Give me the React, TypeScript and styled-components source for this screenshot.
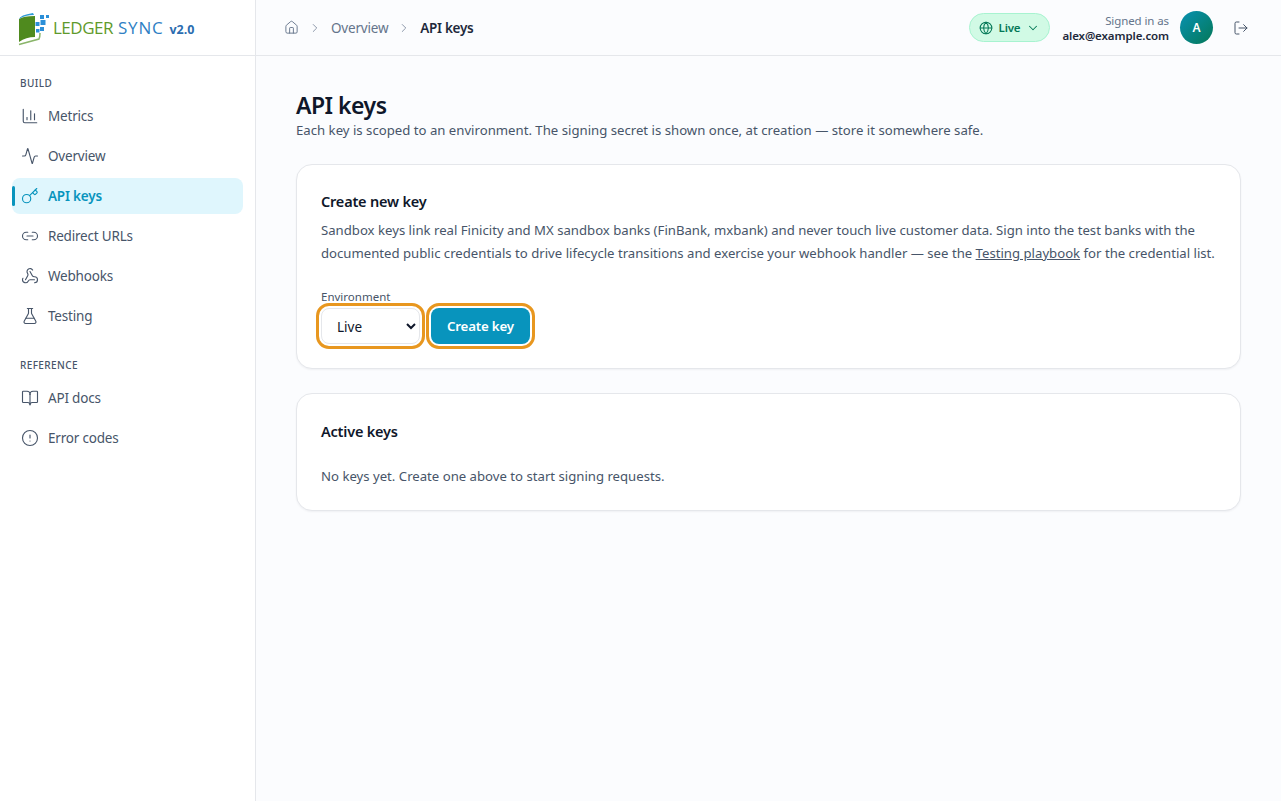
import React from 'react'
import styled, { createGlobalStyle } from 'styled-components'
import {
  ChartColumn,
  Activity,
  Key,
  Link2,
  Webhook,
  FlaskConical,
  BookOpen,
  CircleAlert,
  House,
  ChevronRight,
  ChevronDown,
  Globe,
  LogOut,
} from 'lucide-react'

const GlobalStyle = createGlobalStyle`
  * { box-sizing: border-box; }
  html, body { margin: 0; height: 100%; }
  body {
    font-family: "Noto Sans", "Open Sans", "Liberation Sans", sans-serif;
    background: #fbfcfe;
    color: #0f172a;
  }
`

const Shell = styled.div`
  display: flex;
  height: 801px;
  overflow: hidden;
`

const Sidebar = styled.aside`
  width: 256px;
  flex: none;
  background: #fff;
  border-right: 1px solid #e5e7eb;
`

const Brand = styled.div`
  height: 56px;
  display: flex;
  align-items: center;
  padding-left: 18px;
  border-bottom: 1px solid #e5e7eb;
`

const BrandName = styled.span`
  margin-left: 1px;
  font-family: "Open Sans", sans-serif;
  font-size: 17px;
  font-weight: 500;
  letter-spacing: -0.5px;
  color: #5f9a2c;
`

const BrandBlue = styled.span`
  margin-left: 5px;
  letter-spacing: 0.8px;
  color: #2f7fc4;
`

const BrandVersion = styled.span`
  margin-left: 6px;
  padding-top: 3px;
  font-family: "Open Sans", sans-serif;
  font-size: 12.5px;
  font-weight: 700;
  color: #2b6cb0;
`

const Nav = styled.nav`
  padding: 19px 12px 0;
`

const GroupLabel = styled.div`
  height: 16px;
  line-height: 16px;
  padding-left: 8px;
  font-size: 10px;
  font-weight: 500;
  letter-spacing: 0.4px;
  color: #475569;
`

const NavList = styled.ul`
  list-style: none;
  margin: 7px 0 23px;
  padding: 0;
  display: flex;
  flex-direction: column;
  gap: 4px;
`

const NavItem = styled.li<{ $active?: boolean }>`
  position: relative;
  height: 36px;
  display: flex;
  align-items: center;
  gap: 9px;
  padding-left: 9px;
  border-radius: 8px;
  font-size: 13.5px;
  font-weight: ${p => (p.$active ? 600 : 400)};
  color: ${p => (p.$active ? '#0894bd' : '#475569')};
  background: ${p => (p.$active ? '#dff6fd' : 'transparent')};
  letter-spacing: -0.2px;

  ${p =>
    p.$active &&
    `&::before {
      content: '';
      position: absolute;
      left: 0;
      top: 8px;
      bottom: 8px;
      width: 3px;
      border-radius: 2px;
      background: #0894bd;
    }`}
`

const Column = styled.div`
  flex: 1;
  min-width: 0;
`

const TopBar = styled.header`
  height: 56px;
  display: flex;
  align-items: center;
  justify-content: space-between;
  padding: 0 32px 0 28px;
  border-bottom: 1px solid #e5e7eb;
`

const Crumbs = styled.div`
  display: flex;
  align-items: center;
  gap: 9px;
  font-size: 13.5px;
  letter-spacing: -0.2px;
  color: #64748b;
`

const CurrentCrumb = styled.span`
  font-weight: 600;
  letter-spacing: -0.3px;
  color: #1e293b;
`

const TopRight = styled.div`
  display: flex;
  align-items: center;
`

const EnvPill = styled.div`
  height: 29px;
  display: flex;
  align-items: center;
  gap: 6px;
  padding: 0 9px;
  margin-right: 12px;
  border: 1px solid #a7f3d0;
  border-radius: 15px;
  background: #d1fae5;
  color: #047857;
  font-size: 11.5px;
  font-weight: 600;
  letter-spacing: -0.2px;
`

const UserBlock = styled.div`
  text-align: right;
  font-size: 11.5px;
  line-height: 15px;
  letter-spacing: -0.1px;
  color: #64748b;
`

const UserEmail = styled.div`
  font-weight: 600;
  color: #1e293b;
`

const Avatar = styled.div`
  width: 33px;
  height: 33px;
  margin: 0 20px 0 11px;
  border-radius: 50%;
  display: flex;
  align-items: center;
  justify-content: center;
  background: linear-gradient(135deg, #0891b2, #047857);
  color: #fff;
  font-size: 12px;
  font-weight: 600;
`

const Main = styled.main`
  padding: 33px 40px;
`

const Title = styled.h1`
  margin: 0;
  font-size: 23px;
  line-height: 32px;
  font-weight: 600;
  letter-spacing: -0.5px;
  color: #0f172a;
`

const Subtitle = styled.p`
  margin: 0 0 25px;
  font-size: 13.18px;
  line-height: 18px;
  color: #475569;
`

const Card = styled.section<{ $low?: boolean }>`
  padding: ${p => (p.$low ? '25px 24px 23px' : '24px')};
  margin-bottom: 24px;
  background: #fff;
  border: 1px solid #e5e7eb;
  border-radius: 16px;
  box-shadow: 0 1px 2px rgba(15, 23, 42, 0.05);
`

const CardTitle = styled.h2`
  margin: 0;
  font-size: 14.5px;
  line-height: 24px;
  font-weight: 600;
  letter-spacing: -0.2px;
  color: #0f172a;
`

const Body = styled.p`
  margin: 6px 0 0;
  font-size: 13.17px;
  line-height: 23px;
  color: #475569;
`

const DocLink = styled.a`
  color: #475569;
  text-decoration: underline;
`

const FormRow = styled.div`
  display: flex;
  align-items: flex-end;
  gap: 11px;
  margin-top: 25px;
`

const Field = styled.label`
  display: flex;
  flex-direction: column;
  gap: 4px;
  font-size: 11.5px;
  line-height: 14px;
  color: #475569;
`

const EnvSelect = styled.select`
  width: 99px;
  height: 36px;
  padding: 1px 0 0 11px;
  background: #fff;
  border: 1px solid #e5e7eb;
  border-radius: 8px;
  font: inherit;
  font-size: 13.5px;
  color: #0f172a;
  outline: 3px solid #e8971f;
  outline-offset: 2px;
`

const CreateButton = styled.button`
  height: 36px;
  padding: 0 16px;
  border: 0;
  border-radius: 8px;
  background: #0894bd;
  color: #fff;
  font: inherit;
  font-size: 13.3px;
  font-weight: 600;
  letter-spacing: -0.2px;
  outline: 3px solid #e8971f;
  outline-offset: 2px;
`

const Empty = styled.p`
  margin: 23px 0 0;
  font-size: 13.17px;
  line-height: 21px;
  color: #475569;
`

const build = [
  { name: 'Metrics', icon: ChartColumn },
  { name: 'Overview', icon: Activity },
  { name: 'API keys', icon: Key, active: true },
  { name: 'Redirect URLs', icon: Link2 },
  { name: 'Webhooks', icon: Webhook },
  { name: 'Testing', icon: FlaskConical },
]

const reference = [
  { name: 'API docs', icon: BookOpen },
  { name: 'Error codes', icon: CircleAlert },
]

const Logo = () => (
  <svg width="34" height="36" viewBox="0 0 34 36">
    <path d="M1 9 Q5 6 17 6 V27 Q8 27 1 32 Z" fill="#4f8a1e" />
    <path d="M1 9 Q2 5 15 3 L16 5 Q7 5 1 9 Z" fill="#2f9bd6" />
    <path d="M1 34.5 Q10 32 21 29 Q22 27 22 23" fill="none" stroke="#8ab56a" strokeWidth="1.5" />
    <g fill="#2b8fd8">
      <rect x="22" y="5" width="4" height="4" />
      <rect x="28" y="5" width="3" height="3" />
      <rect x="22.5" y="10" width="5" height="5" />
      <rect x="17.5" y="12" width="4" height="4" />
      <rect x="22" y="17" width="4" height="4" />
      <rect x="18" y="19" width="3.5" height="3.5" />
    </g>
  </svg>
)

const NavGroup = ({ label, items }: { label: string; items: typeof build }) => (
  <>
    <GroupLabel>{label}</GroupLabel>
    <NavList>
      {items.map(({ name, icon: Icon, active }) => (
        <NavItem key={name} $active={active}>
          <Icon size={18} strokeWidth={1.5} />
          {name}
        </NavItem>
      ))}
    </NavList>
  </>
)

export default function App() {
  return (
    <Shell>
      <GlobalStyle />
      <Sidebar>
        <Brand>
          <Logo />
          <BrandName>
            LEDGER<BrandBlue>SYNC</BrandBlue>
          </BrandName>
          <BrandVersion>v2.0</BrandVersion>
        </Brand>
        <Nav>
          <NavGroup label="BUILD" items={build} />
          <NavGroup label="REFERENCE" items={reference} />
        </Nav>
      </Sidebar>
      <Column>
        <TopBar>
          <Crumbs>
            <House size={15} strokeWidth={1.5} />
            <ChevronRight size={14} strokeWidth={1.25} />
            <span>Overview</span>
            <ChevronRight size={14} strokeWidth={1.25} />
            <CurrentCrumb>API keys</CurrentCrumb>
          </Crumbs>
          <TopRight>
            <EnvPill>
              <Globe size={14} strokeWidth={1.75} />
              Live
              <ChevronDown size={14} strokeWidth={1.75} />
            </EnvPill>
            <UserBlock>
              Signed in as
              <UserEmail>alex@example.com</UserEmail>
            </UserBlock>
            <Avatar>A</Avatar>
            <LogOut size={16} strokeWidth={1.5} color="#475569" />
          </TopRight>
        </TopBar>
        <Main>
          <Title>API keys</Title>
          <Subtitle>
            Each key is scoped to an environment. The signing secret is shown once, at creation — store it somewhere safe.
          </Subtitle>
          <Card>
            <CardTitle>Create new key</CardTitle>
            <Body>
              Sandbox keys link real Finicity and MX sandbox banks (FinBank, mxbank) and never touch live customer data. Sign into the test banks with the documented public credentials to drive lifecycle transitions and exercise your webhook handler — see the <DocLink>Testing playbook</DocLink> for the credential list.
            </Body>
            <FormRow>
              <Field>
                Environment
                <EnvSelect defaultValue="live">
                  <option value="live">Live</option>
                  <option value="sandbox">Sandbox</option>
                </EnvSelect>
              </Field>
              <CreateButton>Create key</CreateButton>
            </FormRow>
          </Card>
          <Card $low>
            <CardTitle>Active keys</CardTitle>
            <Empty>No keys yet. Create one above to start signing requests.</Empty>
          </Card>
        </Main>
      </Column>
    </Shell>
  )
}
